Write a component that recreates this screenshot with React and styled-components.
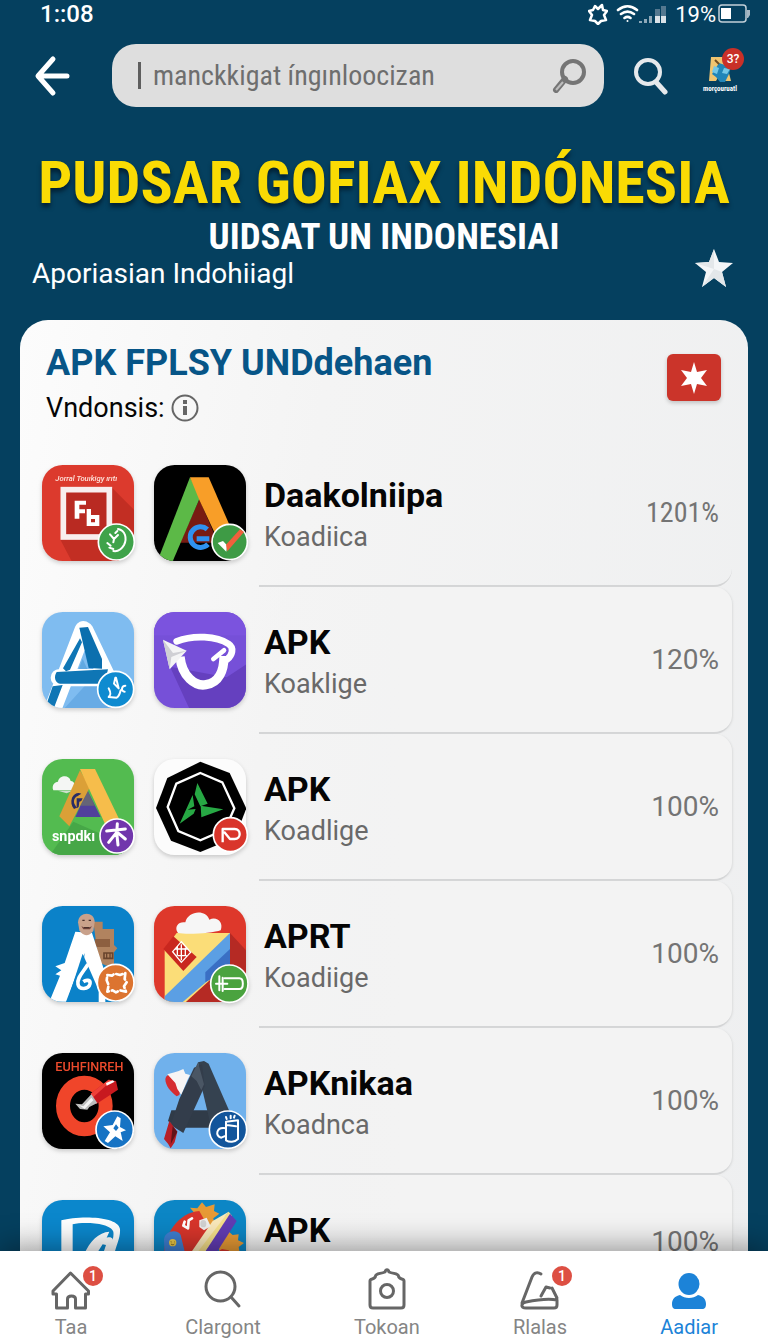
import React, { useId } from 'react'
import styled, { createGlobalStyle } from 'styled-components'

function Tile({ view, bg, children, badge }) {
    const id = useId()
    const [x, y] = view
    return (
        <TileSvg viewBox={`${x} ${y} 276 288`} aria-hidden="true">
            <clipPath id={id}>
                <rect x={x} y={y} width="276" height="288" rx="62" />
            </clipPath>
            <g clipPath={`url(#${id})`}>
                <rect x={x} y={y} width="276" height="288" fill={bg} />
                {children}
            </g>
            {badge}
        </TileSvg>
    )
}

function Badge({ cx, cy, r = 54, fill, children }) {
    return (
        <g>
            <circle cx={cx} cy={cy} r={r} fill={fill} stroke="#fff" strokeWidth="5" />
            {children}
        </g>
    )
}

const line = { fill: 'none', stroke: '#fff', strokeLinecap: 'round', strokeLinejoin: 'round' }

const FrameTile = () => (
    <Tile view={[36, 44]} bg="#dc3a2d" badge={
        <Badge cx={259} cy={275} fill="#3fa34a">
            <path {...line} strokeWidth="6" d="M264 236c22 4 28 28 18 48-8 14-20 20-32 18M240 252l12 14 12-12M252 266l-2 10M232 278l10 8M238 292l12 4M262 242l-6 6" />
        </Badge>
    }>
        <path d="M246 112l70 70v160H130l-38-72z" fill="#c22e23" />
        <text x="76" y="92" fontSize="23" fontStyle="italic" fontWeight="500" fill="#ffe4dc" fontFamily="Roboto, sans-serif">Jorral Touıkigy ırıtı</text>
        <rect x="100" y="118" width="138" height="142" fill="#b92a22" stroke="#f8eeee" strokeWidth="17" />
        <path fill="#fff" d="M134 151h34v12h-20v14h17v12h-17v16h-14zM170 176h13v18h25v33h-38zM183 206v10h12v-10z" fillRule="evenodd" />
    </Tile>
)

const RibbonTile = () => (
    <Tile view={[372, 47]} bg="#000" badge={
        <Badge cx={599} cy={278} r={53} fill="#3e9b45">
            <path d="M563 281l16-6 12 13-2 19z" fill="#fff" />
            <path d="M588 286l42-46 12 8-50 58z" fill="#f2603c" />
        </Badge>
    }>
        <path d="M508 150l56 130H450z" fill="#781b12" />
        <path d="M480 84l32 56-84 196h-46z" fill="#5cb947" />
        <path d="M480 84h56l70 160-46 20-52-112z" fill="#f89e28" />
        <path d="M532 240a31 31 0 1 0 2 45M500 268h38" fill="none" stroke="#2f92f0" strokeWidth="15" />
    </Tile>
)

const BlueprintTile = () => (
    <Tile view={[36, 33]} bg="#7fbcf0" badge={
        <Badge cx={257} cy={265} r={54} fill="#0f8bd0">
            <path {...line} strokeWidth="6" d="M256 230l-4 18 14 14-8-32M236 262c4 8 10 16 0 26l24 2c8-4 10-14 12-22M286 254c-12 0-14 18-2 18" />
        </Badge>
    }>
        <path d="M196 220l116 20v90H96z" fill="#68abe5" />
        <path d="M160 86L66 330M164 88l66 138M88 230h136" stroke="#fff" strokeWidth="52" strokeLinecap="round" strokeLinejoin="round" fill="none" />
        <path d="M148 80l26-2 42 96v29l-40-2z" fill="#0b6fae" />
        <path d="M150 112l6 12-36 82-12 5-9-9zM80 213l154-8-10 43H90c-14-2-20-20-10-35zM68 256l30-4-26 68H46z" fill="#0f76b5" />
        <path d="M158 174l14 30h-26z" fill="#61a9e2" />
    </Tile>
)

const OrbitTile = () => (
    <Tile view={[372, 34]} bg="#7650d8">
        <path d="M372 34h276v70H372z" fill="#7b53de" />
        <path d="M420 198l60 130h170V190l-60 40z" fill="#6540bf" />
        <path {...line} strokeWidth="20" d="M440 122c50-20 120-16 156 8 18 12 10 34-4 46" />
        <path {...line} strokeWidth="28" strokeLinecap="butt" d="M450 168c6 60 46 90 78 84 40-6 54-44 54-86" />
        <path {...line} strokeWidth="14" d="M550 175l32-26" />
        <path d="M399 117l71 33-51 56z" fill="#f4f4f5" />
        <path d="M399 117l30 40 41-7-46 19-5 37z" fill="#cfcfd4" />
    </Tile>
)

const ParkTile = () => (
    <Tile view={[36, 42]} bg="#53bb50" badge={
        <Badge cx={261} cy={273} r={51} fill="#7136ac">
            <path {...line} strokeWidth="9" d="M262 236l-2 30M230 258l56-6M260 262l-24 30M262 262l24 20M260 262l4 38" />
        </Badge>
    }>
        <path d="M130 230l180 80v20H60z" fill="#46a747" />
        <path d="M70 136c-6-14 4-26 14-26 4-20 34-22 38-2 14 0 18 22 6 28z" fill="#f4f6f4" />
        <path d="M84 137h44l-18 8z" fill="#cde0cd" />
        <path d="M172 136l40 80h-76z" fill="#51409b" />
        <path d="M172 136l22 46h-44z" fill="#656477" />
        <path d="M150 76l30 50-62 118-30-30z" fill="#dba037" />
        <path d="M150 72h45l82 170-44 12z" fill="#f6bd4b" />
        <path d="M126 158c6-12 18-18 28-12l-12 8c-10 4-12 16-8 24l6 10-8 4c-8-10-10-22-6-34zM140 160h18l-4 8-6 2-2 16-6 4z" fill="#292c66" />
        <text x="66" y="288" fontSize="43" fontWeight="700" fill="#fff" fontFamily="Roboto, sans-serif">snpdkı</text>
    </Tile>
)

const NonagonTile = () => (
    <Tile view={[370, 42]} bg="#fcfcfc" badge={
        <Badge cx={599} cy={269} r={51} fill="#d9352b">
            <path {...line} strokeWidth="7" strokeLinecap="butt" d="M576 292v-40h36c20 0 20 30 0 30h-14l-18-22" />
        </Badge>
    }>
        <path d="M509 50l88 34 50 106-34 88-104 43-88-34-45-98 34-90z" fill="#000" />
        <path d="M509 84l66 28 36 78-28 64-74 32-66-28-32-72 26-70z" fill="none" stroke="#fff" strokeWidth="7" />
        <path d="M500 114l31 62-22 8-17-36zM486 150l5 34-20 10 24-2-6 14-42 30zM510 182l68 11-66 24z" fill="#27a844" />
    </Tile>
)

const ParcelTile = () => (
    <Tile view={[36, 31]} bg="#0b82c9" badge={
        <Badge cx={257} cy={261} r={55} fill="#dc7430">
            <path {...line} strokeWidth="8" strokeDasharray="20 9" d="M232 238l14 2 8-6 16 4 16-6-2 18 6 10-8 12 6 16-18-4-12 6-10-6-16 4 4-20-6-14z" />
        </Badge>
    }>
        <path d="M190 78h28v22h34v48l10 10-10 12v50l-46-20z" fill="#b1835f" />
        <path d="M194 130h46v24h-46z" fill="#8d5f40" />
        <path d="M222 172h26v16h-26z" fill="none" stroke="#6a452e" strokeWidth="5" />
        <path d="M230 172v16M240 172v16" stroke="#6a452e" strokeWidth="4" />
        <path d="M136 108l50 4 36 110-10 20h14v90h-30l-40-90 8-70-56 146H58l32-78-14-4 18-12-18-12 28-10z" fill="#fff" />
        <path d="M158 174l48 110v44h-98z" fill="#0b82c9" />
        <path d="M174 206c-16 26-34 40-30 60 4 18 32 16 36-2 2-12-12-12-20-6" fill="none" stroke="#fff" strokeWidth="11" />
        <path d="M144 80c2-34 50-34 50 0l-4 26c-14 18-32 16-42-2z" fill="#c9a18b" />
        <path d="M154 92c10 5 22 5 32 0l-6 9h-20z" fill="#77463e" />
        <path d="M157 74h7M176 74h7M162 96h16" stroke="#4b302c" strokeWidth="4" />
    </Tile>
)

const MailTile = () => (
    <Tile view={[372, 31]} bg="#de382b" badge={
        <Badge cx={598} cy={264} r={56} fill="#4aa33f">
            <path {...line} strokeWidth="6" d="M584 248h44c14 0 14 32 0 32h-44M568 242v42M578 246v40M558 264h34" />
        </Badge>
    }>
        <path d="M600 112l56 60v160H440z" fill="#b52a24" />
        <path d="M440 112h160v86L460 326h-56V160z" fill="#fbdd78" />
        <path d="M600 112v86L450 326h-46v-24z" fill="#5b9fe4" />
        <path d="M600 160v60l-74 40v-30z" fill="#3a6fc4" />
        <path d="M430 122l70 62-40 42-60-66z" fill="#c9271f" />
        <path d="M454 138l28 32-28 30-26-32zM436 160h38M444 180h26M454 146v48M442 152v28M466 156v24" fill="none" stroke="#fff" strokeWidth="4" />
        <path d="M444 112c-14-20 4-36 22-32 8-36 62-40 72-8 22-12 44 8 34 32-20 8-100 14-128 8z" fill="#f6f6f6" />
    </Tile>
)

const RingTile = () => (
    <Tile view={[36, 38]} bg="#000" badge={
        <Badge cx={254} cy={268} r={56} fill="#1673c4">
            <path d="M262 228l10 6-2 26 18 10-16 6 6 26-22-14-22 20-10-6 16-26-20-18 28-4z" fill="#fff" />
            <path d="M258 252l8 10-8 10-8-8z" fill="#1673c4" />
        </Badge>
    }>
        <text x="76" y="92" fontSize="38" fontWeight="500" fill="#ec4a2c" fontFamily="Roboto, sans-serif">EUHFINREH</text>
        <ellipse cx="163" cy="197" rx="64" ry="70" fill="none" stroke="#f0452a" strokeWidth="42" />
        <path d="M182 160l54-42 22 4 6 26-66 44z" fill="#c8191f" />
        <path d="M182 160l54-42 10 2-58 52z" fill="#ef4038" />
        <path d="M228 128l20-8 6 4-24 12z" fill="#fff" />
        <path d="M136 190l20 2 28-30 18 26-24 12-6 8-22-2z" fill="#bcbcbc" />
        <path d="M146 194l14 4 24-26 6 8-26 26z" fill="#f4f4f4" />
    </Tile>
)

const GraphiteTile = () => (
    <Tile view={[372, 38]} bg="#70b1ec" badge={
        <Badge cx={594} cy={268} r={56} fill="#12559b">
            <path {...line} strokeWidth="6" d="M588 244l36-4v56c-10 10-26 10-36 4zM588 264c-30-6-34 24-14 28l14-6M590 254l28 4M590 236l-2-6M602 234v-8M612 232l2-6" />
        </Badge>
    }>
        <path d="M406 116c4-18 22-12 30-18l20 22-8 44-8 4c-18-14-34-32-34-52z" fill="#d62c30" />
        <path d="M412 102l22-6 12-4 14-6 6 14 14 4-8 16-18 44-12-18-6-18z" fill="#f7f5f5" />
        <path d="M424 210h134v52H440l-26-20z" fill="#303b48" />
        <path d="M504 66l18-4 14 8 62 142-18 50h-36l-30-126z" fill="#354250" />
        <path d="M492 82l24-10 8 66-64 140-38-24 26-78z" fill="#333d4b" />
        <path d="M504 66l18 66-8 18-14-28-16-14z" fill="#4a5664" />
        <path d="M418 242l24 32-8 32-12 18-8-14-12-14z" fill="#b61f27" />
        <path d="M428 258l14 16-20 38z" fill="#60141b" />
    </Tile>
)

const NibTile = () => (
    <Tile view={[36, 27]} bg="#0b87cc">
        <path d="M94 88c50-14 170-14 176 26 2 30-14 50-20 90h-22c6-30 26-56 22-82-8-26-88-30-122-22v110H94z" fill="#fff" />
        <path d="M162 190c18-40 44-66 76-68l-8 18c16-4 22 4 18 16l-8 36h-22l10-30-10-2-22 34h-18l34-50-24 46z" fill="#fff" />
    </Tile>
)

const RocketTile = () => (
    <Tile view={[372, 27]} bg="#0c86c5">
        <path d="M480 50l22 2 14-18 12 14 26-8-2 20 16 8-18 14 20 108h60l-4-22 16-12-18-8 2-18-18 2-14-12-60-6z" fill="#e79a35" />
        <path d="M402 200c-6-60 40-136 106-140l28 50-40 90z" fill="#d8352b" />
        <path d="M402 150c-2-30 40-38 50-18l16 66h-64z" fill="#3f7ed0" />
        <circle cx="428" cy="155" r="11" fill="#edc846" />
        <path d="M422 152l3 1M432 152l2 1M423 159c4 3 7 3 10 0" stroke="#554014" strokeWidth="2" fill="none" />
        <path d="M596 62l10 12-96 130h-38z" fill="#f6e08a" />
        <path d="M600 68l20 22-70 110h-36z" fill="#623cb4" />
        <path d="M548 90l48-28-100 130h-18z" fill="#fae9bb" />
        <path {...line} strokeWidth="8" d="M464 92l-4 12 14 8 2-24 10-6" />
        <path d="M508 88l22-8 12 26-20 12-14-10z" fill="#f0f0ef" />
        <ellipse cx="520" cy="98" rx="9" ry="11" fill="#d2d2d2" />
        <path d="M556 186l20-12 20 4 6 10z" fill="#d8352b" />
    </Tile>
)

const HomeIcon = () => (
    <NavSvg viewBox="51 1268 42 42" aria-hidden="true">
        <path d="M54 1291l17.500-18 18 18v3h-3v14h-10v-9c0-4-8-4-8 0v9h-11v-14h-3.500z" />
    </NavSvg>
)

const SearchIcon = () => (
    <NavSvg viewBox="201 1268 42 42" aria-hidden="true">
        <circle cx="219.500" cy="1286.500" r="14.500" />
        <path d="M230 1297l8 9" />
    </NavSvg>
)

const CameraIcon = () => (
    <NavSvg viewBox="363 1268 42 42" aria-hidden="true">
        <path d="M367 1281c0-3 5-1 5.500-5 .5-3 5-2 9.500-4 1-3 3-3 4 0 4.500 2 9 1 9.500 4 .5 4 5.500 2 5.500 5v24c0 2-1 3-3 3h-28c-2 0-3-1-3-3z" />
        <circle cx="384" cy="1291" r="6.500" />
    </NavSvg>
)

const BellIcon = () => (
    <NavSvg viewBox="518 1268 42 42" aria-hidden="true">
        <path d="M521 1303l10-26c2-5 6-5 9-3M551 1288l5 10M556 1300v5c0 2-1 3-3 3h-28c-6 0-5-5 0-6 10-2 20-4 31-2M540 1296l5-9 4 1" />
    </NavSvg>
)

const UserIcon = () => (
    <NavSvg viewBox="670 1268 42 42" $solid aria-hidden="true">
        <ellipse cx="691" cy="1284" rx="10.500" ry="11" />
        <path d="M674 1304c0-5 3-8 8-9 5 4 13 4 18 0 5 1 8 4 8 9 0 3-1 5-4 5h-26c-3 0-4-2-4-5z" />
    </NavSvg>
)

const apps = [
    { name: 'Daakolniipa', sub: 'Koadiica', value: '1201%', First: FrameTile, Second: RibbonTile },
    { name: 'APK', sub: 'Koaklige', value: '120%', First: BlueprintTile, Second: OrbitTile },
    { name: 'APK', sub: 'Koadlige', value: '100%', First: ParkTile, Second: NonagonTile },
    { name: 'APRT', sub: 'Koadiige', value: '100%', First: ParcelTile, Second: MailTile },
    { name: 'APKnikaa', sub: 'Koadnca', value: '100%', First: RingTile, Second: GraphiteTile },
    { name: 'APK', value: '100%', First: NibTile, Second: RocketTile },
]

const tabs = [
    { label: 'Taa', Icon: HomeIcon, badge: 1 },
    { label: 'Clargont', Icon: SearchIcon },
    { label: 'Tokoan', Icon: CameraIcon },
    { label: 'Rlalas', Icon: BellIcon, badge: 1 },
    { label: 'Aadiar', Icon: UserIcon, active: true },
]

function App() {
    return (
        <Screen>
            <GlobalStyle />
            <StatusBar>
                <span>1::08</span>
                <StatusIcons>
                    <svg width="20" height="22" viewBox="0 0 20 22" fill="none" stroke="#fff" strokeWidth="2.500" strokeLinejoin="round">
                        <path d="M7 3l3 3 4-4 1 5 4 1-3 4 2 5-5 1-3 3-3-3-5-1 2-5-3-4 4-1z" />
                    </svg>
                    <SignalIcons>
                        <svg width="23" height="20" viewBox="0 0 23 20" fill="none" stroke="#fff" strokeWidth="2.600" strokeLinecap="round">
                            <path d="M2 6c6-5 13-5 19 0M5 10c4-3 9-3 13 0M8.500 14c2-1.500 4-1.500 6 0" />
                            <circle cx="11.500" cy="17" r="1" fill="#fff" stroke="none" />
                        </svg>
                        <svg width="28" height="20" viewBox="0 0 28 20" fill="#8fa9b9">
                            <path d="M0 17h3v2H0zM5 15h3v4H5zM10 12h3v7h-3z" />
                            <path d="M16 5h5v14h-5zM22 2h5v17h-5z" fill="#54788f" />
                            <path d="M16 12h5v7h-5zM22 12h5v7h-5z" fill="#dbe3e8" />
                        </svg>
                    </SignalIcons>
                    <BatteryText>19%</BatteryText>
                    <svg width="32" height="20" viewBox="0 0 32 20">
                        <rect x="1" y="1" width="27" height="17" rx="3" fill="none" stroke="#c3d0d9" strokeWidth="1.500" />
                        <rect x="3" y="4" width="10" height="11" fill="#fff" />
                        <path d="M29 6h3v5l-2 3h-1z" fill="#a4b7c4" />
                    </svg>
                </StatusIcons>
            </StatusBar>
            <Content>
                <SearchRow>
                    <IconButton aria-label="Back">
                        <svg width="38" height="42" viewBox="0 0 38 42" fill="none" stroke="#fff" strokeWidth="5" strokeLinecap="round" strokeLinejoin="round">
                            <path d="M19 4L4 21l15 17M5 21h28" />
                        </svg>
                    </IconButton>
                    <SearchBox>
                        <Caret />
                        <SearchInput aria-label="Search apps" defaultValue="manckkigat íngınloocizan" />
                        <svg width="34" height="34" viewBox="0 0 34 34" fill="none" stroke="#757575" strokeWidth="4">
                            <circle cx="21" cy="13" r="11" />
                            <path d="M13 20L4 31" strokeWidth="6" strokeLinecap="round" />
                            <path d="M11 23l-7 8" stroke="#bdbdbd" strokeWidth="2" />
                        </svg>
                    </SearchBox>
                    <IconButton aria-label="Search">
                        <svg width="34" height="38" viewBox="0 0 34 38" fill="none" stroke="#e6e9ec" strokeWidth="4">
                            <circle cx="14" cy="15" r="12" />
                            <path d="M22 25l9 10" strokeWidth="5" strokeLinecap="round" />
                        </svg>
                    </IconButton>
                    <Profile aria-label="Profile">
                        <svg width="30" height="27" viewBox="0 0 30 27">
                            <path d="M6 1h14l6 24h-7l-4-7-4 7H4z" fill="#f0c570" />
                            <path d="M14 7l6 2 6 2-2 7-4 8h-5l-4-5-4-3z" fill="#2185b8" />
                            <path d="M9 10l5 2-2 6-5-2zM19 12l6 1-3 5-5-1z" fill="#75c8e7" />
                            <path d="M10 4l4 4" stroke="#704c1f" strokeWidth="2" />
                        </svg>
                        <ProfileLabel>morçouruatl</ProfileLabel>
                        <CountBadge $top={-8}>3?</CountBadge>
                    </Profile>
                </SearchRow>
                <Title>PUDSAR GOFIAX INDÓNESIA</Title>
                <Subtitle>UIDSAT UN INDONESIAI</Subtitle>
                <TaglineRow>
                    <Tagline>Aporiasian Indohiiagl</Tagline>
                    <IconButton aria-label="Favourite">
                        <svg width="38" height="38" viewBox="0 0 38 38">
                            <path d="M19 0l5 13 14 1-11 9 4 15-12-9-12 9 4-15L0 14l14-1z" fill="#f4f6f8" />
                            <path d="M19 0v20l8 3 4 15-12-9-12 9 12-18L0 14l14-1z" fill="#e3e7ea" />
                        </svg>
                    </IconButton>
                </TaglineRow>
                <Card>
                    <CardHeader>
                        <div>
                            <CardTitle>APK FPLSY UNDdehaen</CardTitle>
                            <CardNote>
                                Vndonsis:
                                <svg width="28" height="28" viewBox="0 0 28 28" fill="none" stroke="#666" strokeWidth="2">
                                    <circle cx="14" cy="14" r="12.500" />
                                    <path d="M14 12v9M14 6v4" strokeWidth="4" />
                                </svg>
                            </CardNote>
                        </div>
                        <StarButton aria-label="Featured">
                            <svg width="30" height="32" viewBox="0 0 30 32">
                                <path d="M15 0l3 10 10-2-6 8 6 8-10-2-3 10-3-10-10 2 6-8-6-8 10 2z" fill="#fff" />
                            </svg>
                        </StarButton>
                    </CardHeader>
                    <AppList>
                        {apps.map(({ name, sub, value, First, Second }, i) => (
                            <AppRow key={i}>
                                <Tiles>
                                    <First />
                                    <Second />
                                </Tiles>
                                <AppPanel $first={i === 0}>
                                    <div>
                                        <AppName>{name}</AppName>
                                        {sub && <AppSub>{sub}</AppSub>}
                                    </div>
                                    <AppValue $narrow={value.length > 4} $raised={!sub}>{value}</AppValue>
                                </AppPanel>
                            </AppRow>
                        ))}
                    </AppList>
                </Card>
            </Content>
            <BottomNav>
                {tabs.map(({ label, Icon, badge, active }) => (
                    <NavLink href="#" key={label} $active={active}>
                        <NavIcon>
                            <Icon />
                            {badge && <CountBadge $top={-2} $small>{badge}</CountBadge>}
                        </NavIcon>
                        {label}
                    </NavLink>
                ))}
            </BottomNav>
        </Screen>
    )
}

export default App

const GlobalStyle = createGlobalStyle`
* { box-sizing: border-box; }
body {
    margin: 0;
    background: #05405f;
    font-family: Roboto, "Liberation Sans", sans-serif;
}
h1, h2, h3, p, ul { margin: 0; padding: 0; }
button { border: 0; padding: 0; background: none; cursor: pointer; font: inherit; }
`
const Screen = styled.div`
display: flex;
flex-direction: column;
height: 100vh;
background: #05405f;
color: #fff;
`
const StatusBar = styled.div`
display: flex;
align-items: center;
justify-content: space-between;
height: 28px;
padding: 0 18px 0 40px;
font-size: 24px;
font-weight: 500;
`
const StatusIcons = styled.div`
display: flex;
align-items: center;
gap: 8px;
`
const SignalIcons = styled.div`
display: flex;
align-items: center;
`
const BatteryText = styled.span`
font-size: 22px;
font-weight: 400;
margin-right: -6px;
`
const Content = styled.main`
flex: 1;
min-height: 0;
overflow-y: auto;
scrollbar-width: none;
`
const SearchRow = styled.header`
display: flex;
align-items: center;
padding: 16px 30px 0 34px;
gap: 30px;
`
const IconButton = styled.button`
display: flex;
flex-shrink: 0;
`
const SearchBox = styled.div`
flex: 1;
min-width: 0;
display: flex;
align-items: center;
height: 63px;
margin-left: 10px;
padding: 0 18px 0 26px;
border-radius: 24px;
background: #dedede;
`
const Caret = styled.span`
width: 3px;
height: 27px;
margin-right: 12px;
background: #5e5e5e;
`
const SearchInput = styled.input`
flex: 1;
min-width: 0;
padding: 0;
border: 0;
outline: 0;
background: none;
color: #6e6e6e;
font-family: "Roboto Condensed", Roboto, sans-serif;
font-size: 28px;
`
const Profile = styled.button`
position: relative;
display: flex;
flex-direction: column;
align-items: center;
flex-shrink: 0;
width: 36px;
margin-left: 4px;
`
const ProfileLabel = styled.span`
color: #fff;
font-family: "Roboto Condensed", Roboto, sans-serif;
font-size: 7px;
font-weight: 700;
line-height: 12px;
white-space: nowrap;
`
const CountBadge = styled.span`
position: absolute;
top: ${(p) => p.$top}px;
right: ${(p) => (p.$small ? -11 : -6)}px;
display: flex;
align-items: center;
justify-content: center;
width: ${(p) => (p.$small ? 20 : 22)}px;
height: ${(p) => (p.$small ? 20 : 22)}px;
border-radius: 50%;
background: ${(p) => (p.$small ? '#dd4f43' : '#c93028')};
color: #fff;
font-size: ${(p) => (p.$small ? 14 : 12)}px;
font-weight: 500;
`
const Title = styled.h1`
margin-top: 40px;
text-align: center;
white-space: nowrap;
color: #fadb04;
font-family: "Roboto Condensed", Roboto, sans-serif;
font-size: 60px;
font-weight: 700;
line-height: 72px;
text-shadow: 0 4px 4px rgba(0, 20, 35, 0.7);
`
const Subtitle = styled.h2`
text-align: center;
font-family: "Roboto Condensed", Roboto, sans-serif;
font-size: 37px;
font-weight: 700;
line-height: 36px;
`
const TaglineRow = styled.div`
display: flex;
align-items: flex-start;
justify-content: space-between;
height: 44px;
margin-top: -6px;
padding: 0 35px 0 32px;
`
const Tagline = styled.p`
align-self: flex-end;
font-size: 28px;
line-height: 38px;
`
const Card = styled.section`
margin: 27px 20px 0;
padding: 22px 16px 0 22px;
border-radius: 28px 28px 0 0;
background: linear-gradient(100deg, #fcfcfc 0%, #f4f4f4 35%, #eeeff0 100%);
color: #050505;
`
const CardHeader = styled.div`
display: flex;
align-items: flex-start;
justify-content: space-between;
height: 98px;
padding-right: 11px;
padding-left: 4px;
`
const CardTitle = styled.h2`
color: #075587;
font-size: 36px;
font-weight: 700;
line-height: 42px;
`
const CardNote = styled.p`
display: flex;
align-items: center;
gap: 6px;
margin-top: 8px;
font-size: 27px;
line-height: 32px;
`
const StarButton = styled.button`
display: flex;
align-items: center;
justify-content: center;
width: 54px;
height: 47px;
margin-top: 12px;
border-radius: 6px;
background: #cb342a;
box-shadow: 0 2px 4px rgba(0, 0, 0, 0.2);
`
const AppList = styled.ul`
list-style: none;
`
const AppRow = styled.li`
display: flex;
height: 147px;
`
const Tiles = styled.div`
display: flex;
gap: 20px;
padding-top: 25px;
margin-right: 13px;
`
const TileSvg = styled.svg`
display: block;
flex-shrink: 0;
width: 92px;
height: 96px;
overflow: visible;
filter: drop-shadow(0 2px 2px rgba(0, 0, 0, 0.18));
`
const AppPanel = styled.div`
flex: 1;
display: flex;
justify-content: space-between;
padding: 35px 13px 0 5px;
border-bottom: 2px solid #d4d5d6;
border-radius: ${(p) => (p.$first ? '0 0 18px 0' : '0 18px 18px 0')};
background: ${(p) => (p.$first ? 'none' : 'linear-gradient(90deg, rgba(243, 243, 243, 0), #f3f3f3 30%)')};
box-shadow: ${(p) => (p.$first ? 'none' : '2px 0 2px -1px #dcdddd')};
`
const AppName = styled.h3`
font-size: 34px;
font-weight: 700;
line-height: 40px;
`
const AppSub = styled.p`
margin-top: 4px;
color: #696969;
font-size: 27px;
line-height: 36px;
`
const AppValue = styled.span`
align-self: flex-start;
margin-top: ${(p) => (p.$raised ? 14 : 20)}px;
color: #747474;
font-family: ${(p) => (p.$narrow ? '"Roboto Condensed", ' : '')}Roboto, sans-serif;
font-size: 28px;
line-height: 36px;
`
const BottomNav = styled.nav`
position: relative;
z-index: 1;
display: flex;
justify-content: space-between;
flex-shrink: 0;
height: 93px;
padding: 17px 50px 0;
background: #fff;
box-shadow: 0 -4px 28px rgba(0, 0, 0, 0.4);
`
const NavLink = styled.a`
display: flex;
flex-direction: column;
align-items: center;
gap: 4px;
color: ${(p) => (p.$active ? '#1c83d8' : '#858585')};
font-size: 20px;
line-height: 26px;
text-decoration: none;
`
const NavIcon = styled.span`
position: relative;
display: flex;
`
const NavSvg = styled.svg`
width: 42px;
height: 42px;
fill: ${(p) => (p.$solid ? '#1c83d8' : 'none')};
stroke: ${(p) => (p.$solid ? 'none' : '#666')};
stroke-width: 3px;
stroke-linecap: round;
stroke-linejoin: round;
`
